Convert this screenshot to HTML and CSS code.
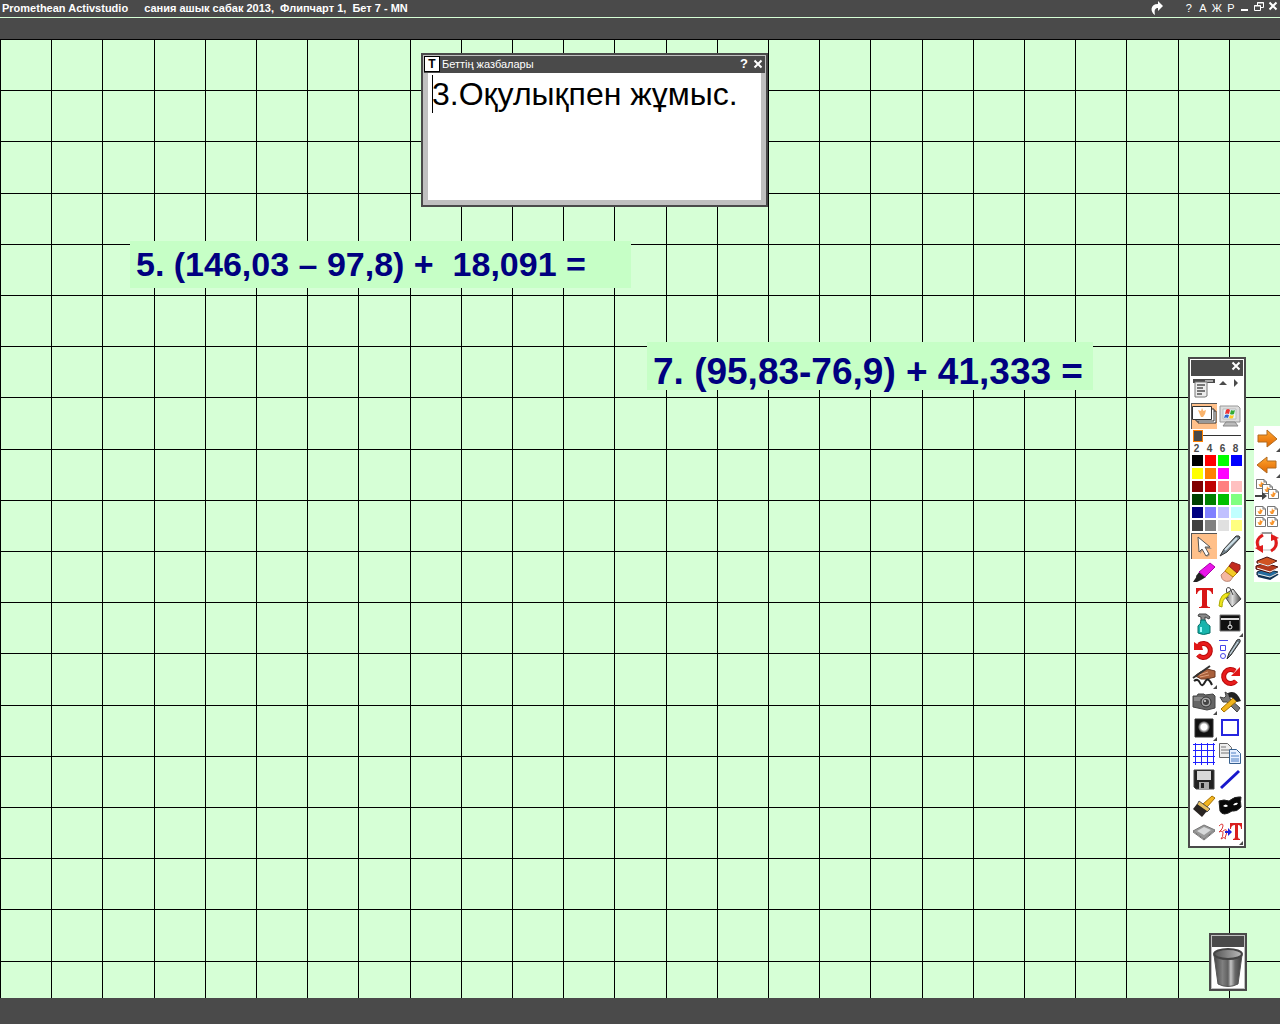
FILE: index.html
```html
<!DOCTYPE html>
<html lang="kk">
<head>
<meta charset="utf-8">
<title>Promethean Activstudio</title>
<link rel="stylesheet" href="styles.css">
</head>
<body>
<svg class="defs" aria-hidden="true">
  <defs>
    <linearGradient id="steel" x1="0" x2="1"><stop offset="0" stop-color="#444"/><stop offset=".3" stop-color="#808080"/><stop offset=".5" stop-color="#606060"/><stop offset=".6" stop-color="#c4c4c4"/><stop offset=".75" stop-color="#686868"/><stop offset="1" stop-color="#3c3c3c"/></linearGradient>
    <linearGradient id="inside" x1="0" x2="1"><stop offset="0" stop-color="#555"/><stop offset="1" stop-color="#bbb"/></linearGradient>
    <linearGradient id="amber" x1="0" y1="0" x2="0" y2="1"><stop offset="0" stop-color="#ffa630"/><stop offset="1" stop-color="#e06500"/></linearGradient>
    <linearGradient id="pot" x1="0" x2="1"><stop offset="0" stop-color="#555"/><stop offset=".5" stop-color="#ddd"/><stop offset="1" stop-color="#444"/></linearGradient>
    <radialGradient id="glow"><stop offset=".5" stop-color="#fff"/><stop offset="1" stop-color="#222"/></radialGradient>
    <symbol id="leaf" viewBox="0 0 11 10"><path d="M.5.5h7.500l2.500 2.500v6.500h-10z" fill="#fff" stroke="#777"/><path d="M8 .5v2.500h2.500" fill="none" stroke="#777"/><path d="M5 2l1 2 2-.5-1 2.500-1 2H4L2.500 5l2 .5z" fill="#f9952c"/></symbol>
  </defs>
</svg>

<header class="titlebar">
  <h1 class="title"><span>Promethean Activstudio</span><span>сания ашык сабак 2013,  Флипчарт 1,  Бет 7 - MN</span></h1>
  <nav class="controls">
    <button class="ctl share" aria-label="Redo"><svg viewBox="0 0 14 16"><path d="M8 1l5 5-5 5V8C5 8 4 10 5 15 0 12 0 4 8 4z" fill="#fff"/></svg></button>
    <button class="ctl">?</button>
    <button class="ctl">А</button>
    <button class="ctl">Ж</button>
    <button class="ctl">Р</button>
    <button class="ctl" aria-label="Minimize"><svg viewBox="0 0 10 16"><path d="M1 10h7" stroke="#fff" stroke-width="2"/></svg></button>
    <button class="ctl" aria-label="Restore"><svg viewBox="0 0 10 16"><path d="M3.500 5V2.500h6v5H7M.5 5.500h6v5h-6zM3 3h7M0 6h7" fill="none" stroke="#fff"/></svg></button>
    <button class="ctl" aria-label="Close"><svg viewBox="0 0 10 16"><path d="M1.500 2.500l7 7m0-7l-7 7" stroke="#fff" stroke-width="2"/></svg></button>
  </nav>
</header>
<div class="strip"></div>

<main class="page">
  <section class="window notes">
    <div class="notes-head">
      <span class="badge">T</span>
      <label class="notes-title" for="notes">Беттің жазбалары</label>
      <button class="mini" aria-label="Help">?</button>
      <button class="mini" aria-label="Close"><svg viewBox="0 0 10 10"><path d="M1.500 1.500l7 7m0-7l-7 7" stroke="#fff" stroke-width="2"/></svg></button>
    </div>
    <div class="notes-body">
      <textarea id="notes" class="notes-text" spellcheck="false">3.Оқулықпен жұмыс.</textarea>
      <span class="caret"></span>
    </div>
  </section>

  <p class="task task-five">5. (146,03 – 97,8) +  18,091 =</p>
  <p class="task task-seven">7. (95,83-76,9) + 41,333 =</p>

  <aside class="window toolbox">
    <div class="box-head"><button class="mini" aria-label="Close"><svg viewBox="0 0 10 10"><path d="M1.500 1.500l7 7m0-7l-7 7" stroke="#fff" stroke-width="2"/></svg></button></div>
    <div class="tools">
      <button class="tool" aria-label="Main menu"><svg viewBox="0 0 26 26"><path d="M2 2h22v4H2z" fill="#4a4a4a"/><path d="M14 3h8v2h-8z" fill="#aaa"/><path d="M4 5h12v14l-2 1H4z" fill="#ececec" stroke="#777"/><path d="M6 8h8M6 11h6M6 14h8M6 17h5" stroke="#777" stroke-width="2"/></svg></button>
      <button class="tool" aria-label="Roll up"><svg viewBox="0 0 26 26"><path d="M2 8l4-4 4 4zM17 2l4 4-4 4z" fill="#4a4a4a"/></svg></button>
      <button class="tool active" aria-label="Flipcharts"><svg viewBox="0 0 26 26"><path d="M7 8h18v12H7z" fill="#fff" stroke="#333"/><path d="M5 6h18v12H5z" fill="#fff" stroke="#333"/><path d="M1.500 3.500h19v13h-19z" fill="#fff" stroke="#333"/><path d="M7 7l3 1 1-3 1.500 3L15 7l-1 4-2 3h-2z" fill="#f9b36c"/></svg></button>
      <button class="tool" aria-label="Desktop"><svg viewBox="0 0 26 26"><path d="M3 3h18l2 2v14H3z" fill="#ddd" stroke="#999"/><path d="M6 6h13v10H6z" fill="#e9f6fb" stroke="#bbb"/><path d="M9 7q2-2 4 0l-1 4q-2-1-4 0z" fill="#e33"/><path d="M14 7q2 1 4 0l-1 4q-2 1-4 0z" fill="#3a3"/><path d="M8 12q2-1 4 0l-1 3q-2-1-4 0z" fill="#36c"/><path d="M13 12q2 1 4 0l-1 3q-2 1-4 0z" fill="#fc2"/><path d="M9 19h9l3 4H6z" fill="#bbb" stroke="#888"/></svg></button>
    </div>
    <input class="width-slider" type="range" min="0" max="10" value="0" aria-label="Pen width">
    <div class="sizes"><button>2</button><button>4</button><button>6</button><button>8</button></div>
    <div class="palette">
      <button class="c-black" aria-label="Black"></button><button class="c-red" aria-label="Red"></button><button class="c-lime" aria-label="Lime"></button><button class="c-blue" aria-label="Blue"></button>
      <button class="c-yellow" aria-label="Yellow"></button><button class="c-orange" aria-label="Orange"></button><button class="c-magenta" aria-label="Magenta"></button><button class="c-white" aria-label="White"></button>
      <button class="c-maroon" aria-label="Maroon"></button><button class="c-crimson" aria-label="Crimson"></button><button class="c-salmon" aria-label="Salmon"></button><button class="c-pink" aria-label="Pink"></button>
      <button class="c-forest" aria-label="Forest"></button><button class="c-green" aria-label="Green"></button><button class="c-grass" aria-label="Grass"></button><button class="c-mint" aria-label="Mint"></button>
      <button class="c-navy" aria-label="Navy"></button><button class="c-iris" aria-label="Iris"></button><button class="c-lilac" aria-label="Lilac"></button><button class="c-ice" aria-label="Ice"></button>
      <button class="c-coal" aria-label="Coal"></button><button class="c-gray" aria-label="Gray"></button><button class="c-silver" aria-label="Silver"></button><button class="c-lemon" aria-label="Lemon"></button>
    </div>
    <div class="tools">
      <button class="tool active" aria-label="Select"><svg viewBox="0 0 26 26"><path d="M8 5l13 11h-6l4 6-3 2-4-7-3 4z" fill="#777" opacity=".6"/><path d="M7 4l12 10h-5l4 7-3 2-4-7-3 3z" fill="#fff" stroke="#555"/></svg></button>
      <button class="tool" aria-label="Pen"><svg viewBox="0 0 26 26"><path d="M3 23L7 16 19 3q4-1 4 2L10 19z" fill="#71818a" stroke="#333"/><path d="M8 17L20 5" stroke="#cfe0e8" stroke-width="2"/></svg></button>
      <button class="tool" aria-label="Highlighter"><svg viewBox="0 0 26 26"><path d="M2 23l4-6 4 4-4 2z" fill="#222"/><path d="M5 17l4-5 6 6-5 3q-4 0-5-4z" fill="#222"/><path d="M8 13L19 4l5 4-10 10z" fill="#e815e8" stroke="#a0a"/></svg></button>
      <button class="tool" aria-label="Eraser"><svg viewBox="0 0 26 26"><path d="M4 16l4-4 8 6-3 4q-8 2-9-6z" fill="#f5b7a0" stroke="#b87"/><path d="M8 12l4-5 9 6-5 5z" fill="#f3cb28" stroke="#b80"/><path d="M12 7l3-4 8 3v4l-3 4z" fill="#c32a1d" stroke="#822"/></svg></button>
      <button class="tool" aria-label="Text"><svg viewBox="0 0 26 26"><path d="M5 3h17v6h-1q-1-4-5-4v15q0 2 3 2v1H8v-1q3 0 3-2V5q-4 0-5 4H5z" fill="#d81616"/></svg></button>
      <button class="tool" aria-label="Fill"><svg viewBox="0 0 26 26"><path d="M7 10l9-6 8 10-9 8z" fill="url(#pot)" stroke="#444"/><path d="M11 13Q7 0 13 3l3 7" fill="none" stroke="#444"/><path d="M13 8Q3 7 2 21l3 1q0-8 5-10z" fill="#f1e51d" stroke="#aa0"/></svg></button>
      <button class="tool" aria-label="Clear"><svg viewBox="0 0 26 26"><path d="M8 3h7l4 3-1 2-4-2v4h-4V6L7 5z" fill="#888" stroke="#444"/><path d="M10 9h4q1 4 5 6v7q-7 3-12 0v-7q3-2 3-6z" fill="#18b5ad" stroke="#067069"/><path d="M10 16v5" stroke="#9ff" stroke-width="2"/></svg></button>
      <button class="tool more" aria-label="Revealer"><svg viewBox="0 0 26 26"><path d="M3 4h20v16H3z" fill="#111" stroke="#777"/><path d="M4 8h18" stroke="#ddd" stroke-width="2"/><path d="M13 10v5" stroke="#eee"/><circle cx="13" cy="16" r="2" fill="none" stroke="#eee"/></svg></button>
      <button class="tool" aria-label="Undo"><svg viewBox="0 0 26 26"><path d="M8 8a7 7 0 1 1-1 10" fill="none" stroke="#b80c0c" stroke-width="5"/><path d="M8 8a7 7 0 1 1-1 10" fill="none" stroke="#e81c1c" stroke-width="3"/><path d="M3 5l3 2 4-1 2 7H3z" fill="#e01616"/></svg></button>
      <button class="tool" aria-label="Properties"><svg viewBox="0 0 26 26"><path d="M2 3.500h9M3.500 8.500h5v5h-5z" fill="none" stroke="#4545e8"/><circle cx="6" cy="19" r="2.500" fill="none" stroke="#4545e8"/><path d="M10 22l2-6L20 3q4-2 3 2L14 18z" fill="#71818a" stroke="#333"/><path d="M13 17l8-12" stroke="#d9e8f0"/></svg></button>
      <button class="tool more" aria-label="Handwriting"><svg viewBox="0 0 26 26"><path d="M4 13q4-4 12-7l8 2v6l-8 2-6 0q-3-2-6-3z" fill="#a9603b" stroke="#6b3822"/><path d="M8 12l9-3M9 14l9-2" stroke="#e0a17d"/><path d="M2 15L19 3" stroke="#333" stroke-width="2"/><path d="M3 18q4-3 6 2t5-1 7 3" fill="none" stroke="#222" stroke-width="2"/></svg></button>
      <button class="tool" aria-label="Redo"><svg viewBox="0 0 26 26"><path d="M18 8a7 7 0 1 0 1 10" fill="none" stroke="#b80c0c" stroke-width="5"/><path d="M18 8a7 7 0 1 0 1 10" fill="none" stroke="#e81c1c" stroke-width="3"/><path d="M23 4v9h-9l3-3z" fill="#e01616"/></svg></button>
      <button class="tool more" aria-label="Camera"><svg viewBox="0 0 26 26"><path d="M2 7h4l1-2h6l1 1 8-1 2 2v12l-8 2-14-3z" fill="#666" stroke="#444"/><path d="M3 9h9M3 11h6" stroke="#aaa"/><circle cx="15" cy="13" r="5" fill="#aaa" stroke="#333"/><circle cx="15" cy="13" r="3" fill="#444"/><circle cx="14" cy="12" r="1" fill="#ddd"/></svg></button>
      <button class="tool" aria-label="Tools"><svg viewBox="0 0 26 26"><path d="M3 8l4 1 2-2-1-4 5 3 0 4 10 9-3 4-10-10-4 0z" fill="#777" stroke="#444"/><path d="M4 20L16 9l4 3L7 23z" fill="#f1b51c" stroke="#a67200"/><path d="M11 4q8-4 13 8l-4 1-4-4-4-1z" fill="#222"/></svg></button>
      <button class="tool more" aria-label="Spotlight"><svg viewBox="0 0 26 26"><path d="M4 4h18v18H4z" fill="#111" stroke="#333"/><circle cx="13" cy="12" r="6" fill="url(#glow)"/></svg></button>
      <button class="tool" aria-label="Shapes"><svg viewBox="0 0 26 26"><path d="M5 5h16v15H5z" fill="#fff" stroke="#2626e0" stroke-width="2"/></svg></button>
      <button class="tool" aria-label="Grid"><svg viewBox="0 0 26 26"><path d="M4.500 2v22M10.500 2v22M16.500 2v22M22.500 2v22M2 3.500h22M2 9.500h22M2 15.500h22M2 21.500h22" stroke="#2020ff" stroke-width="1"/></svg></button>
      <button class="tool" aria-label="Copy"><svg viewBox="0 0 26 26"><path d="M2.500 2.500h8l4 4v10h-12z" fill="#eee" stroke="#666"/><path d="M4 6h5M4 9h8M4 12h8" stroke="#777"/><path d="M12.500 8.500h7l4 4v10h-11z" fill="#e6efff" stroke="#36608f"/><path d="M14 12h5M14 15h8M14 18h8M14 20h8" stroke="#4d7fc4"/></svg></button>
      <button class="tool" aria-label="Save"><svg viewBox="0 0 26 26"><path d="M3 3h20v19H5l-2-2z" fill="#222" stroke="#444"/><path d="M6 4h14v9H6z" fill="#d8d8d8"/><path d="M8 15h10v7H8z" fill="#aaa"/><path d="M10 16h3v5h-3z" fill="#222"/></svg></button>
      <button class="tool" aria-label="Line"><svg viewBox="0 0 26 26"><path d="M4 21L22 4" stroke="#1818cc" stroke-width="3"/></svg></button>
      <button class="tool" aria-label="Format brush"><svg viewBox="0 0 26 26"><path d="M12 11l9-8 3 2-8 9z" fill="#f2b522" stroke="#a87300"/><path d="M8 8l11 8-3 3-10-7z" fill="#e8c060" stroke="#555"/><path d="M6 11l10 7-5 6-9-8z" fill="#292522"/></svg></button>
      <button class="tool" aria-label="Mask"><svg viewBox="0 0 26 26"><path d="M2 8q5-2 10 0 6-5 12-4-1 4 0 10-4 5-9 4-9 6-12 0z" fill="#080808" stroke="#222"/><path d="M6 13q3-3 5 0-2 2-5 0zM16 12q2-3 5-2-1 3-5 2z" fill="#fff"/></svg></button>
      <button class="tool" aria-label="Tablet"><svg viewBox="0 0 26 26"><path d="M2 12l11-6 11 5-11 9z" fill="#999" stroke="#777"/><path d="M6 12l7-4 7 3-7 5z" fill="#d7d9da"/><path d="M2 13l11 8 11-9" fill="none" stroke="#777"/></svg></button>
      <button class="tool more" aria-label="Recognise text"><svg viewBox="0 0 26 26"><path d="M2 7q4-4 4 0 0 3-4 6 4-2 4 1 0 4-2 6 3-3 5 0M6 12q4-3 4 1l-2 6" fill="none" stroke="#d33" stroke-width="1"/><path d="M8 12h3V9l4 4-4 4v-3H8z" fill="#2020dd"/><path d="M13 4h12v6h-1q0-4-3-4v12q0 2 2 2v1h-7v-1q2 0 2-2V6q-4 0-4 4h-1z" fill="#d92020"/></svg></button>
    </div>
  </aside>

  <nav class="side" aria-label="Pages">
    <button class="tool more" aria-label="Next page"><svg viewBox="0 0 26 26"><path d="M4 9h9V4l10 9-10 8v-5H4z" fill="url(#amber)" stroke="#b06a20"/></svg></button>
    <button class="tool more" aria-label="Previous page"><svg viewBox="0 0 26 26"><path d="M22 9h-9V5L3 13l10 8v-5h9z" fill="url(#amber)" stroke="#b06a20"/></svg></button>
    <button class="tool" aria-label="Page order"><svg viewBox="0 0 26 26"><use href="#leaf" x="2" y="1" width="11" height="10"/><use href="#leaf" x="8" y="6" width="11" height="10"/><use href="#leaf" x="14" y="11" width="11" height="10"/><path d="M1 17h7v-3l5 4-5 4v-3H1z" fill="#444"/></svg></button>
    <button class="tool" aria-label="Page grid"><svg viewBox="0 0 26 26"><use href="#leaf" x="1" y="2" width="11" height="10"/><use href="#leaf" x="13" y="2" width="11" height="10"/><use href="#leaf" x="1" y="13" width="11" height="10"/><use href="#leaf" x="13" y="13" width="11" height="10"/></svg></button>
    <button class="tool" aria-label="Reset page"><svg viewBox="0 0 26 26"><path d="M7 3h11v3h3v14H5V6h2z" fill="#fff" stroke="#bbb"/><path d="M8 3h10" stroke="#999" stroke-width="2"/><path d="M9 5q-9 5-4 13M17 21q8-5 4-13" fill="none" stroke="#e01c1c" stroke-width="3"/><path d="M1 18l8-3v8zM25 8l-8 3V4z" fill="#e01c1c"/></svg></button>
    <button class="tool" aria-label="Library"><svg viewBox="0 0 26 26"><path d="M3 16l8-3 13 3-8 6-13-3z" fill="#246b9e" stroke="#123"/><path d="M4 20l12 3 8-5" stroke="#135" stroke-width="2" fill="none"/><path d="M4 18l12 3 8-4" stroke="#eee" fill="none"/><path d="M2 10l10-3 12 4-8 6-14-4z" fill="#b33a1d" stroke="#411"/><path d="M3 12l13 4 8-4" stroke="#fff" fill="none"/><path d="M3 5l10-4 10 4-9 5-11-3z" fill="#d05422" stroke="#411"/><path d="M4 7l10 3 9-4" stroke="#fff" fill="none"/></svg></button>
  </nav>

  <div class="window bin">
    <div class="bin-head"></div>
    <button class="bin-body" aria-label="Trash"><svg viewBox="0 0 32 41"><path d="M2 8q14 9 28 0l-4 29q-10 5-20 0z" fill="url(#steel)" stroke="#555"/><ellipse cx="16" cy="7" rx="14" ry="5" fill="url(#inside)" stroke="#444" stroke-width="2"/></svg></button>
  </div>
</main>
<footer class="bottom"></footer>
</body>
</html>
```

FILE: styles.css
```css
* { box-sizing: border-box; }

body {
  margin: 0;
  min-height: 100vh;
  display: flex;
  flex-direction: column;
  background: #4a4a4a;
  font-family: "Liberation Sans", Arial, sans-serif;
  font-size: 11px;
}

button {
  margin: 0;
  padding: 0;
  border: 0;
  background: none;
  color: inherit;
  font: inherit;
}

svg { display: block; }
.defs { position: absolute; width: 0; height: 0; }

.titlebar {
  display: flex;
  justify-content: space-between;
  height: 18px;
  padding: 0 2px;
  border-bottom: 1px solid #d6ffd6;
  color: #fff;
}

.title {
  display: flex;
  gap: 16px;
  margin: 0;
  font-size: 11px;
  line-height: 16px;
  font-weight: bold;
  white-space: pre;
}

.controls { display: flex; gap: 4px; line-height: 16px; }
.ctl { min-width: 10px; height: 16px; }
.ctl svg { width: 10px; height: 16px; }
.share { margin-right: 16px; }
.share svg { width: 14px; }

.strip { height: 21px; }

/* Squared paper: five cells to every 256px */
.page {
  position: relative;
  flex: 1;
  min-height: 900px;
  overflow: hidden;
  background-color: #d6ffd6;
  background-image:
    linear-gradient(to right, #000 0 1px, transparent 1px 51px, #000 51px 52px, transparent 52px 102px, #000 102px 103px, transparent 103px 154px, #000 154px 155px, transparent 155px 205px, #000 205px 206px, transparent 206px),
    linear-gradient(to bottom, #000 0 1px, transparent 1px 51px, #000 51px 52px, transparent 52px 102px, #000 102px 103px, transparent 103px 154px, #000 154px 155px, transparent 155px 205px, #000 205px 206px, transparent 206px);
  background-size: 256px 256px;
}

.bottom { height: 26px; }

.window {
  position: absolute;
  border: 2px solid #4a4a4a;
  background: #c0c0c0;
  padding: 1px;
}

.mini {
  width: 14px;
  height: 14px;
  color: #fff;
  font-size: 13px;
  line-height: 14px;
  font-weight: bold;
}
.mini svg { width: 10px; height: 10px; margin: 0 auto; }

.notes { left: 421px; top: 14px; width: 347px; }
.notes-head {
  display: flex;
  align-items: flex-start;
  height: 17px;
  background: #4a4a4a;
  color: #fff;
}
.badge {
  width: 16px;
  height: 16px;
  border: 1px solid #000;
  background: #fff;
  color: #000;
  font-size: 12px;
  line-height: 14px;
  font-weight: bold;
  text-align: center;
}
.notes-title { flex: 1; padding-left: 2px; line-height: 16px; }
.notes-head .mini { height: 16px; line-height: 16px; }
.notes-body { position: relative; padding: 0 4px 4px; }
.notes-text {
  display: block;
  width: 100%;
  height: 127px;
  padding: 2px 4px;
  border: 0;
  outline: 0;
  resize: none;
  background: #fff;
  color: #000;
  font-family: "Liberation Sans", Arial, sans-serif;
  font-size: 32px;
  line-height: 38px;
}
.caret {
  position: absolute;
  left: 8px;
  top: 2px;
  width: 1px;
  height: 38px;
  background: #000;
}

.task {
  position: absolute;
  margin: 0;
  padding: 0 6px;
  background: #c6ffc6;
  color: #000080;
  font-weight: bold;
  white-space: pre;
}
.task-five { left: 130px; top: 202px; width: 501px; font-size: 34px; line-height: 47px; }
.task-seven { left: 647px; top: 303px; width: 446px; padding-top: 8px; font-size: 37px; line-height: 40px; }
.task-seven { height: 48px; line-height: 44px; }

.toolbox { right: 34px; top: 318px; width: 58px; padding-bottom: 2px; background: #fff; }
.box-head {
  display: flex;
  justify-content: flex-end;
  height: 16px;
  margin-bottom: 1px;
  background: #4a4a4a;
}
.box-head .mini { height: 12px; line-height: 12px; }

.tools { display: grid; grid-template-columns: repeat(2, 26px); }
.tool { position: relative; height: 26px; }
.tool svg { width: 26px; height: 26px; }
.tool.active {
  background: #ffc08a;
  box-shadow: inset 1px 1px #555;
}
.more::after {
  content: "";
  position: absolute;
  right: 0;
  bottom: 0;
  border: 2px solid #4a4a4a;
  border-top-color: transparent;
  border-left-color: transparent;
}

.width-slider {
  appearance: none;
  display: block;
  width: 48px;
  height: 13px;
  margin: 0 2px;
  background: linear-gradient(#333, #333) center / 100% 1px no-repeat;
}
.width-slider::-webkit-slider-thumb {
  appearance: none;
  width: 10px;
  height: 12px;
  border: 1px solid #ff8000;
  background: #4a4a4a;
}

.sizes {
  display: grid;
  grid-template-columns: repeat(4, 13px);
  height: 13px;
  color: #4a4a4a;
  font-size: 10px;
  line-height: 13px;
  font-weight: bold;
}
.sizes button { padding-right: 2px; }

.palette {
  display: grid;
  grid-template-columns: repeat(4, 11px);
  grid-auto-rows: 11px;
  gap: 2px;
  padding: 0 1px 1px;
}
.c-black { background: #000; }
.c-red { background: #f00; }
.c-lime { background: #0f0; }
.c-blue { background: #00f; }
.c-yellow { background: #ff0; }
.c-orange { background: #ff8000; }
.c-magenta { background: #f0f; }
.c-white { background: #fff; }
.c-maroon { background: #800000; }
.c-crimson { background: #c00000; }
.c-salmon { background: #ff8080; }
.c-pink { background: #ffc0c0; }
.c-forest { background: #004000; }
.c-green { background: #008000; }
.c-grass { background: #00c000; }
.c-mint { background: #80ff80; }
.c-navy { background: #000080; }
.c-iris { background: #8080ff; }
.c-lilac { background: #c0c0ff; }
.c-ice { background: #c0ffff; }
.c-coal { background: #404040; }
.c-gray { background: #808080; }
.c-silver { background: #e0e0e0; }
.c-lemon { background: #ffff80; }

/* The tool rows sit one pixel under the palette's own margin */
.palette + .tools { padding-top: 1px; }
.toolbox { padding-bottom: 1px; }

.side {
  position: absolute;
  right: 0;
  top: 387px;
  display: grid;
  grid-template-columns: 26px;
  background: #fff;
}

.bin { right: 33px; bottom: 7px; width: 38px; }
.bin-head { height: 11px; background: #4a4a4a; }
.bin-body { display: block; width: 100%; background: #fff; }
.bin-body svg { width: 100%; height: 41px; }
```
